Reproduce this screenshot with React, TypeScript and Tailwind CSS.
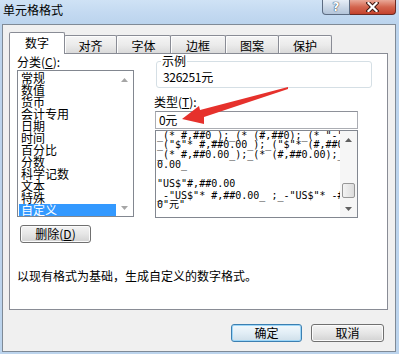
import React from "react";

const cats = ["常规", "数值", "货币", "会计专用", "日期", "时间", "百分比", "分数", "科学记数", "文本", "特殊", "自定义"];

const fmtRows: { t: string; c: string }[] = [
  { t: '_(* #,##0_);_(* (#,##0);_(* "-"_);_(@_)', c: "" },
  { t: '_("$"* #,##0.00_);_("$"* (#,##0.00);_("$"* "-"??_);_(@_)', c: "-mt-px" },
  { t: '_(* #,##0.00_);_(* (#,##0.00);_(* "-"??_);_(@_)', c: "" },
  { t: "0.00_", c: "" },
  { t: '"US$"#,##0.00', c: "mt-[9px]" },
  { t: '_-"US$"* #,##0.00_ ;_-"US$"* -#,##0.00 ;_-"US$"* "-"??_ ;_-@_ ', c: "mt-[2px]" },
  { t: '0"元"', c: "-mt-px" },
];

function Up({ color }: { color: string }) {
  return (
    <svg width="7" height="4" viewBox="0 0 7 4">
      <path d="M0 4 L3.5 0 L7 4 Z" fill={color} />
    </svg>
  );
}
function Down({ color }: { color: string }) {
  return (
    <svg width="7" height="4" viewBox="0 0 7 4">
      <path d="M0 0 L3.5 4 L7 0 Z" fill={color} />
    </svg>
  );
}

const btn =
  "border border-[#707070] rounded-[3px] bg-gradient-to-b from-[#f4f4f4] via-[#e6e6e6] to-[#d2d2d2] flex items-center justify-center shadow-[inset_0_0_0_1px_#fbfbfb]";

const tabCls =
  "h-[19px] -ml-px border border-b-0 border-[#898c95] rounded-t-[2px] bg-gradient-to-b from-[#f5f5f5] via-[#ebebeb] to-[#d8d8d8] flex justify-center pt-[4px] shadow-[inset_1px_1px_0_#fdfdfd]";

export default function App() {
  return (
    <div className="relative w-[399px] h-[354px] overflow-hidden bg-[#bcd4ed] font-['Noto_Sans_CJK_SC',sans-serif] text-[12px] leading-[12px] text-black">
      {/* title bar */}
      <div className="h-[24px] flex items-start bg-gradient-to-b from-[#cfe2f5] via-[#c4daf1] to-[#bbd4ed]">
        <div className="pl-[3px] pt-[4px]">单元格格式</div>
        <div className="ml-auto mr-[3px] flex">
          <div className="w-[28px] h-[15px] border border-t-0 border-[#5c6c82] rounded-bl-[4px] bg-gradient-to-b from-[#e6eef7] via-[#cbd8e7] to-[#b3c4d9] flex items-center justify-center">
            <span className="text-white font-bold text-[12px] leading-[12px] font-['DejaVu_Sans',sans-serif] [text-shadow:0_0_1px_#1e2f45,0_0_1px_#1e2f45]">?</span>
          </div>
          <div className="w-[46px] h-[15px] border border-t-0 border-l-0 border-[#6b2a22] rounded-br-[4px] bg-gradient-to-b from-[#e9a898] via-[#d3654e] to-[#c4412c] flex items-center justify-center">
            <svg width="13" height="10" viewBox="0 0 13 10">
              <path d="M2.5 1 L10.5 9 M10.5 1 L2.5 9" stroke="#3b1711" strokeWidth="4.2" strokeLinecap="square" />
              <path d="M2.5 1 L10.5 9 M10.5 1 L2.5 9" stroke="#ffffff" strokeWidth="2.2" strokeLinecap="square" />
            </svg>
          </div>
        </div>
      </div>

      {/* client */}
      <div className="ml-[2px] w-[394px] h-[328px] border border-[#7f8a96] bg-[#f0f0f0] flex flex-col">
        <div className="ml-[6px] mt-[7px] flex flex-col">
          {/* tabs */}
          <div className="h-[22px] flex items-end">
            <div className="relative z-10 w-[56px] h-[22px] border border-b-0 border-[#898c95] rounded-t-[2px] bg-white flex justify-center pt-[4px]">
              数字
            </div>
            <div className={`${tabCls} w-[53px]`}>对齐</div>
            <div className={`${tabCls} w-[55px]`}>字体</div>
            <div className={`${tabCls} w-[56px]`}>边框</div>
            <div className={`${tabCls} w-[54px]`}>图案</div>
            <div className={`${tabCls} w-[54px]`}>保护</div>
          </div>

          {/* panel */}
          <div className="w-[379px] h-[257px] -mt-px border border-[#898c95] bg-white flex flex-col">
            <div className="flex pl-[7px] pt-[2px]">
              {/* left column */}
              <div className="w-[117px] flex flex-col">
                <div className="h-[12px]">
                  分类(<span className="underline">C</span>):
                </div>
                <div className="mt-[2px] h-[147px] border border-[#828790] flex">
                  <div className="flex-1 pt-[1px] pl-[1px] flex flex-col">
                    {cats.map((c) => (
                      <div
                        key={c}
                        className={
                          c === "自定义"
                            ? "h-[12px] pl-[2px] bg-[#3399ff] text-white"
                            : "h-[12px] pl-[2px]"
                        }
                      >
                        {c}
                      </div>
                    ))}
                  </div>
                  <div className="w-[17px] bg-white flex flex-col justify-between">
                    <div className="h-[17px] flex items-center justify-center">
                      <Up color="#a6a6a6" />
                    </div>
                    <div className="h-[17px] flex items-center justify-center">
                      <Down color="#a6a6a6" />
                    </div>
                  </div>
                </div>
                <div className={`mt-[8px] ml-[3px] w-[71px] h-[18px] ${btn}`}>
                  删除(<span className="underline">D</span>)
                </div>
              </div>

              {/* right column */}
              <div className="ml-[20px] w-[218px] flex flex-col">
                <div className="relative mt-[5px] ml-[2px] w-[216px] h-[27px] border border-[#d5dfe5] rounded-[3px] pl-[6px] pt-[9px] tracking-[-0.3px]">
                  <div className="absolute left-[4px] -top-[7px] bg-white px-[1px] tracking-normal">示例</div>
                  326251元
                </div>
                <div className="mt-[8px] h-[12px]">
                  类型(<span className="underline">T</span>):
                </div>
                <div className="mt-[3px] ml-[1px] w-[203px] h-[18px] border border-[#abadb3] border-t-[#8e9199] flex items-center pl-[3px] tracking-[-0.3px]">
                  0元
                </div>
                <div className="mt-[1px] ml-[1px] w-[203px] h-[88px] border border-[#828790] flex">
                  <div className="flex-1 overflow-hidden pl-[1px] flex flex-col font-['DejaVu_Sans_Mono','Noto_Sans_CJK_SC',monospace] text-[10px] leading-[10px]">
                    {fmtRows.map((r, i) => (
                      <div key={i} className={`h-[10px] whitespace-pre ${r.c}`}>
                        {r.t}
                      </div>
                    ))}
                  </div>
                  <div className="w-[17px] bg-[#f6f6f6] flex flex-col">
                    <div className="h-[17px] flex items-center justify-center">
                      <Up color="#606060" />
                    </div>
                    <div className="mt-[35px] mx-auto w-[13px] h-[15px] border border-[#979797] rounded-[2px] bg-gradient-to-r from-[#f3f3f3] to-[#dcdcdc]" />
                    <div className="mt-auto h-[17px] flex items-center justify-center">
                      <Down color="#606060" />
                    </div>
                  </div>
                </div>
              </div>
            </div>
            <div className="mt-[27px] pl-[7px]">以现有格式为基础，生成自定义的数字格式。</div>
          </div>
        </div>

        {/* bottom buttons */}
        <div className="mt-[14px] flex justify-end pr-[11px] gap-[9px]">
          <div className="w-[71px] h-[18px] border border-[#3c7fb1] rounded-[3px] bg-gradient-to-b from-[#f2f8fc] via-[#e2eef6] to-[#cfdfea] flex items-center justify-center shadow-[inset_0_0_0_1px_#9cd6f8]">
            确定
          </div>
          <div className={`w-[73px] h-[18px] ${btn}`}>取消</div>
        </div>
      </div>

      {/* red annotation arrow */}
      <svg className="absolute left-0 top-0 pointer-events-none" width="399" height="354" viewBox="0 0 399 354">
        <polygon
          points="182,119 199,106 200,110 288,87 288,89 204,117 204,124"
          fill="#e6312c"
        />
      </svg>
    </div>
  );
}
